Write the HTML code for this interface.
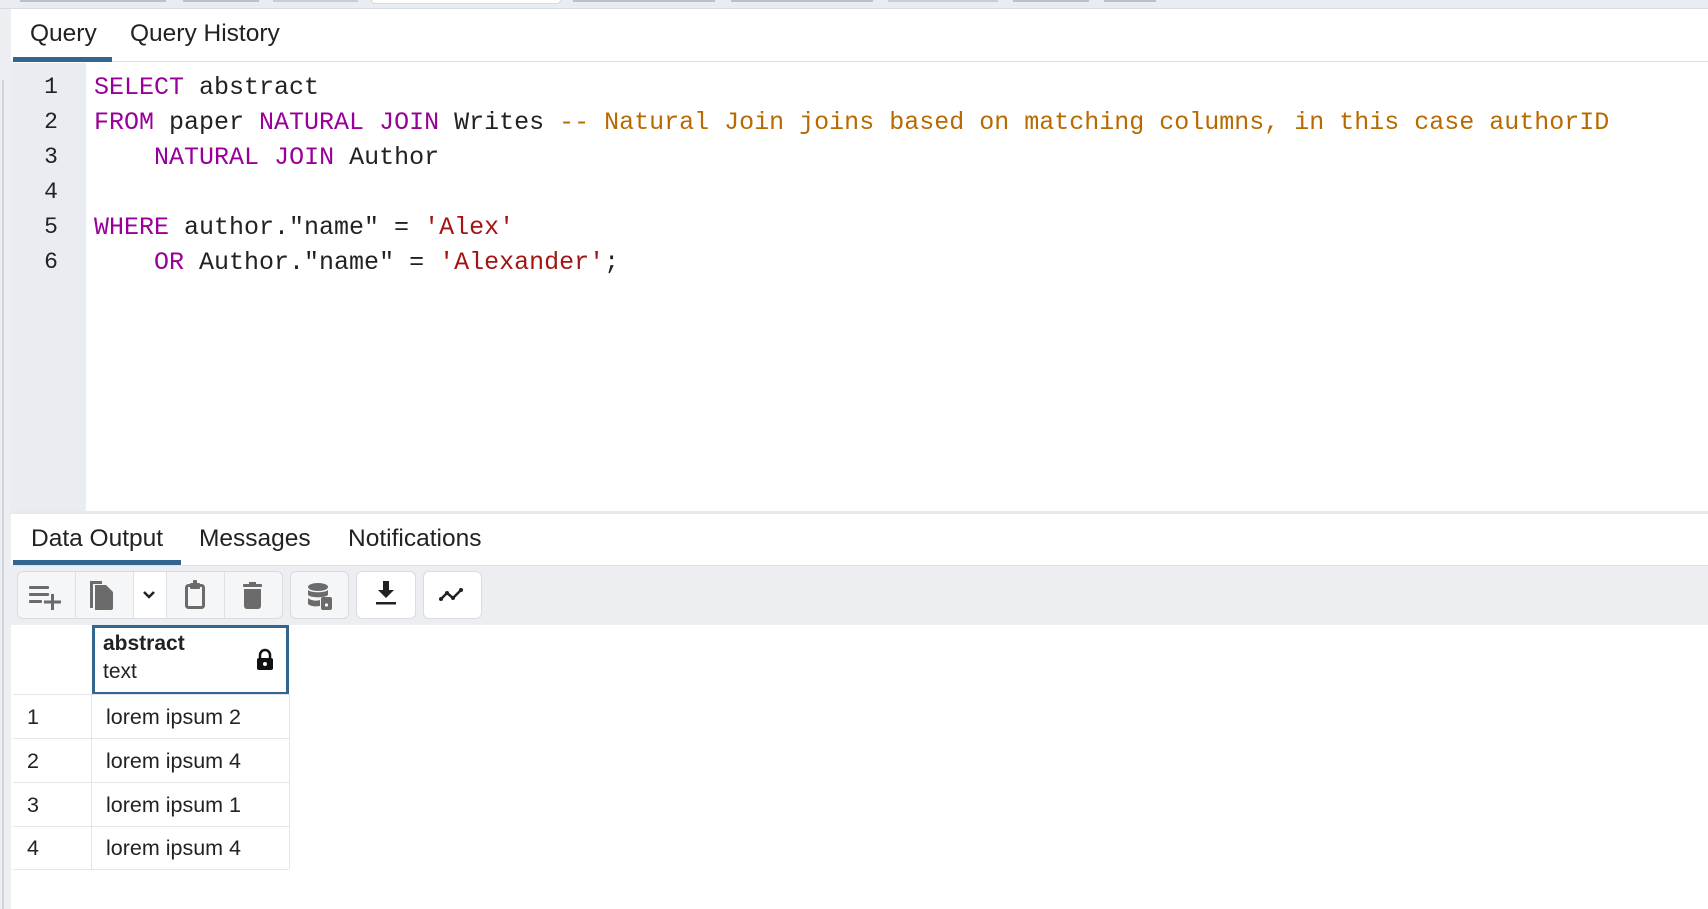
<!DOCTYPE html>
<html><head><meta charset="utf-8"><style>
*{box-sizing:border-box;margin:0;padding:0}
body{width:1708px;height:909px;position:relative;background:#fff;font-family:"Liberation Sans",Roboto,sans-serif;overflow:hidden;color:#222}
.a{position:absolute}
.code{font-family:"Liberation Mono","DejaVu Sans Mono",monospace;font-size:25px;white-space:pre;color:#222;line-height:35px}
.k{color:#990099}
.c{color:#b86a00}
.s{color:#a31515}
.ln{font-family:"Liberation Mono",monospace;font-size:23px;color:#222;width:80px;text-align:center;line-height:35px}
.tab{font-size:24.5px;color:#222;top:0}
.btn{position:absolute;top:571px;height:48px;border:1px solid #d8dce3;border-radius:6px;background:#f5f6f8}
.sep{position:absolute;top:572px;width:1px;height:46px;background:#dde0e6}
.row{position:absolute;left:13px;width:276px;height:44px;border-bottom:1px solid #e3e5ea;font-size:21.5px}
.row span{position:absolute;top:10px}
</style></head><body>
<div class="a" style="left:0;top:0;width:11px;height:909px;background:#eceef2"></div>
<div class="a" style="left:2px;top:80px;width:2px;height:829px;background:#cfd3dc"></div>
<div class="a" style="left:0;top:0;width:1708px;height:9px;background:#e9ecf1;border-bottom:1px solid #d6dae2"></div>
<div class="a" style="left:20px;top:0;width:146px;height:2px;background:#b9c0cc"></div>
<div class="a" style="left:183px;top:0;width:76px;height:2px;background:#b9c0cc"></div>
<div class="a" style="left:273px;top:0;width:85px;height:2px;background:#c8cdd6"></div>
<div class="a" style="left:371px;top:0;width:190px;height:4px;background:#fff;border:1px solid #d6dae2;border-top:none;border-radius:0 0 5px 5px"></div>
<div class="a" style="left:573px;top:0;width:142px;height:2px;background:#b9c0cc"></div>
<div class="a" style="left:731px;top:0;width:142px;height:2px;background:#b9c0cc"></div>
<div class="a" style="left:888px;top:0;width:110px;height:2px;background:#c8cdd6"></div>
<div class="a" style="left:1013px;top:0;width:76px;height:2px;background:#b9c0cc"></div>
<div class="a" style="left:1104px;top:0;width:52px;height:2px;background:#b9c0cc"></div>
<div class="a" style="left:11px;top:10px;width:1697px;height:52px;background:#fff;border-bottom:1px solid #dcdfe6"></div>
<div class="a tab" style="left:30px;top:20px">Query</div>
<div class="a tab" style="left:130px;top:20px">Query History</div>
<div class="a" style="left:13px;top:57px;width:99px;height:5px;background:#326690"></div>
<div class="a" style="left:11px;top:63px;width:75px;height:448px;background:#e9ecf1"></div>
<div class="a" style="left:11px;top:70px">
<div class="ln">1</div><div class="ln">2</div><div class="ln">3</div><div class="ln">4</div><div class="ln">5</div><div class="ln">6</div>
</div>
<div class="a code" style="left:94px;top:70px"><span class="k">SELECT</span> abstract
<span class="k">FROM</span> paper <span class="k">NATURAL</span> <span class="k">JOIN</span> Writes <span class="c">-- Natural Join joins based on matching columns, in this case authorID</span>
    <span class="k">NATURAL</span> <span class="k">JOIN</span> Author

<span class="k">WHERE</span> author."name" = <span class="s">'Alex'</span>
    <span class="k">OR</span> Author."name" = <span class="s">'Alexander'</span>;</div>
<div class="a" style="left:11px;top:511px;width:1697px;height:3px;background:#e6e9ee"></div>
<div class="a tab" style="left:31px;top:525px">Data Output</div>
<div class="a tab" style="left:199px;top:525px">Messages</div>
<div class="a tab" style="left:348px;top:525px">Notifications</div>
<div class="a" style="left:13px;top:560px;width:168px;height:5px;background:#326690"></div>
<div class="a" style="left:11px;top:565px;width:1697px;height:60px;background:#eceef2;border-top:1px solid #dfe2e8"></div>
<div class="btn" style="left:17px;width:266px"></div>
<div class="a" style="left:133px;top:572px;width:33px;height:46px;background:#fff"></div>
<div class="sep" style="left:75px"></div><div class="sep" style="left:133px"></div><div class="sep" style="left:166px"></div><div class="sep" style="left:224px"></div>
<div class="btn" style="left:290px;width:59px"></div>
<div class="btn" style="left:356px;width:60px;background:#fff"></div>
<div class="btn" style="left:423px;width:59px;background:#fff"></div>
<svg class="a" style="left:17px;top:571px" width="466" height="48" viewBox="0 0 466 48">
 <g fill="#6b6b6b">
  <rect x="12" y="15" width="20" height="3" rx="1"/><rect x="12" y="22" width="20" height="3" rx="1"/><rect x="12" y="29" width="13" height="3" rx="1"/>
  <rect x="34" y="23" width="3" height="16"/><rect x="27" y="29.5" width="17" height="3"/>
  <path d="M73 10h12v3H76v24h-3z"/><path d="M78 14h11l7 7v16a2 2 0 0 1-2 2H78z"/>
  <rect x="226" y="13" width="19" height="3" rx="1"/><rect x="232" y="11" width="7" height="3"/><path d="M227 18h17v17a3 3 0 0 1-3 3h-11a3 3 0 0 1-3-3z"/>
  <ellipse cx="301" cy="16" rx="10" ry="4"/><path d="M291 19c3 3 17 3 20 0v5c-3 3-17 3-20 0zM291 27c3 3 10 3 12 2v6c-5 1-10 0-12-2z"/><rect x="304" y="26" width="11" height="13" rx="2"/>
 </g>
 <rect x="169.5" y="14.5" width="17" height="22" rx="2" fill="none" stroke="#6b6b6b" stroke-width="3"/>
 <rect x="173" y="12" width="10" height="6" rx="1" fill="#6b6b6b"/><rect x="176" y="9" width="4" height="4" rx="1" fill="#6b6b6b"/>
 <path d="M127 21l5 5 5-5" fill="none" stroke="#222" stroke-width="2.5"/>
 <circle cx="309.5" cy="34" r="1.6" fill="#fff"/>
 <g fill="#222">
  <path d="M366 10h6v9h5l-8 8-8-8h5z"/><rect x="359" y="31" width="20" height="2.5"/>
 </g>
 <path d="M424 28l6-6 6 5 8-8" fill="none" stroke="#222" stroke-width="2.5" stroke-linejoin="round"/>
 <g fill="#222"><circle cx="424" cy="28" r="2"/><circle cx="430" cy="22" r="2"/><circle cx="436" cy="27" r="2"/><circle cx="444" cy="19" r="2"/></g>
</svg>
<div class="a" style="left:92px;top:625px;width:197px;height:70px;border:3px solid #326690"></div>
<div class="a" style="left:103px;top:632px;font-size:21px;font-weight:bold">abstract</div>
<div class="a" style="left:103px;top:660px;font-size:21px">text</div>
<svg class="a" style="left:256px;top:648px" width="18" height="24" viewBox="0 0 18 24"><path d="M4 10V7a5 5 0 0 1 10 0v3" fill="none" stroke="#111" stroke-width="2.5"/><rect x="1" y="10" width="16" height="12" rx="2" fill="#111"/><circle cx="9" cy="16" r="2" fill="#fff"/></svg>
<div class="a" style="left:13px;top:694px;width:276px;height:1px;background:#e3e5ea"></div>
<div class="a" style="left:91px;top:694px;width:1px;height:175px;background:#e3e5ea"></div>
<div class="a" style="left:289px;top:694px;width:1px;height:175px;background:#e3e5ea"></div>
<div class="row" style="top:695px"><span style="left:14px">1</span><span style="left:93px">lorem ipsum 2</span></div>
<div class="row" style="top:739px"><span style="left:14px">2</span><span style="left:93px">lorem ipsum 4</span></div>
<div class="row" style="top:783px"><span style="left:14px">3</span><span style="left:93px">lorem ipsum 1</span></div>
<div class="row" style="top:826px"><span style="left:14px">4</span><span style="left:93px">lorem ipsum 4</span></div>
</body></html>
